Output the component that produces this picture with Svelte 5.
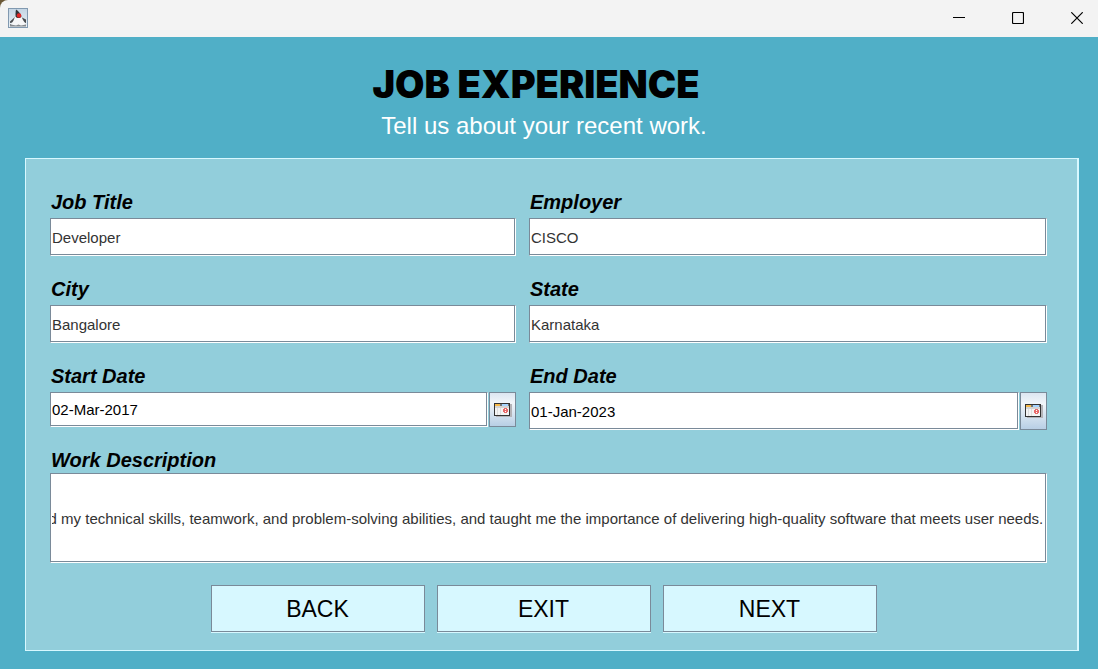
<script>
  import { onMount } from 'svelte';

  let jobTitle = $state('Developer');
  let employer = $state('CISCO');
  let city = $state('Bangalore');
  let region = $state('Karnataka');
  let startDate = $state('02-Mar-2017');
  let endDate = $state('01-Jan-2023');
  let description = $state(
    'enhanced my technical skills, teamwork, and problem-solving abilities, and taught me the importance of delivering high-quality software that meets user needs.'
  );
  let descriptionField;

  // Keep the end of a long description in view.
  onMount(() => {
    descriptionField.scrollLeft = descriptionField.scrollWidth;
  });
</script>

{#snippet calendar()}
  <svg width="18" height="14" viewBox="0 0 18 14" shape-rendering="crispEdges" aria-hidden="true">
    <rect x="2" y="1" width="16" height="13" fill="#b4b4b8" />
    <rect width="16" height="13" fill="#333" />
    <rect x="1" y="1" width="14" height="11" fill="#f4f4f4" />
    <rect x="1" y="1" width="5" height="2" fill="#f5b94a" />
    <rect x="6" y="1" width="2" height="2" fill="#777" />
    <rect x="8" y="1" width="6" height="2" fill="#a5d4ff" />
    <rect x="14" y="1" width="1" height="2" fill="#777" />
    <rect x="1" y="3" width="14" height="2" fill="#d5d5d5" />
    <path d="M3.5 5v7M6.5 5v7" stroke="#dedede" />
    <path d="M9 6h1v-1h3v1h1v3h-1v1h-3v-1h-1z" fill="#e86a6a" />
    <path d="M11 6h1v1h-1zM11 8h1v1h-1z" fill="#fff" />
  </svg>
{/snippet}

<div class="window">
  <header class="titlebar">
    <svg class="app-icon" width="20" height="20" viewBox="0 0 20 20" aria-hidden="true">
      <defs>
        <linearGradient id="tile" x1="0" y1="0" x2="0" y2="1">
          <stop offset="0" stop-color="#c3d5e4" />
          <stop offset="1" stop-color="#eaf0f5" />
        </linearGradient>
      </defs>
      <rect x="0.5" y="0.5" width="19" height="19" fill="url(#tile)" stroke="#8199b0" />
      <path d="M2 16h16v2.500H2z" fill="#85898d" />
      <path d="M7 9 2 13.500V15l5-1zM13 9l5 2.500V15l-4-1z" fill="#4b4d50" />
      <path d="M9.500 3C7.500 6 7 9 5.500 12.500L3 16.500l5 1 2.500-1 2.500 1 5-1-3-4.500C13.500 8.500 12 5 9.500 3z" fill="#f6f6f7" />
      <path d="M8 1.500C7.500 4 7.500 6 7.500 8.500c1.500 2 4.500 2 6 0C12.500 5.500 10.500 3 8 1.500z" fill="#303338" />
      <circle cx="11" cy="7.500" r="2.300" fill="#e02424" />
    </svg>
    <div class="controls">
      <button aria-label="Minimize">
        <svg width="12" height="12" viewBox="0 0 12 12"><path d="M0 5.500h12" stroke="#000" /></svg>
      </button>
      <button aria-label="Maximize">
        <svg width="12" height="12" viewBox="0 0 12 12"><rect x="0.500" y="0.500" width="11" height="11" rx="1" fill="none" stroke="#000" stroke-width="1.200" /></svg>
      </button>
      <button aria-label="Close">
        <svg width="12" height="12" viewBox="0 0 12 12"><path d="M.3.3l11.400 11.400M11.700.3.3 11.700" stroke="#000" stroke-width="1.200" /></svg>
      </button>
    </div>
  </header>

  <main>
    <div class="heading">
      <h1>JOB EXPERIENCE</h1>
      <p>Tell us about your recent work.</p>
    </div>

    <form onsubmit={(e) => e.preventDefault()}>
      <div class="fields">
        <div class="field">
          <label for="job-title">Job Title</label>
          <input id="job-title" type="text" bind:value={jobTitle} />
        </div>
        <div class="field">
          <label for="employer">Employer</label>
          <input id="employer" type="text" bind:value={employer} />
        </div>
        <div class="field">
          <label for="city">City</label>
          <input id="city" type="text" bind:value={city} />
        </div>
        <div class="field">
          <label for="state">State</label>
          <input id="state" type="text" bind:value={region} />
        </div>
        <div class="field">
          <label for="start-date">Start Date</label>
          <div class="date short">
            <input id="start-date" type="text" bind:value={startDate} />
            <button type="button" aria-label="Choose start date">{@render calendar()}</button>
          </div>
        </div>
        <div class="field">
          <label for="end-date">End Date</label>
          <div class="date">
            <input id="end-date" type="text" bind:value={endDate} />
            <button type="button" aria-label="Choose end date">{@render calendar()}</button>
          </div>
        </div>
      </div>

      <div class="description">
        <label for="description">Work Description</label>
        <input id="description" type="text" bind:value={description} bind:this={descriptionField} />
      </div>

      <div class="actions">
        <button type="button">BACK</button>
        <button type="button">EXIT</button>
        <button type="submit">NEXT</button>
      </div>
    </form>
  </main>
</div>

<style>
  :global(body) {
    margin: 0;
    background: #50afc7;
  }

  .window,
  .window * {
    box-sizing: border-box;
  }

  .window {
    min-height: 100vh;
    display: flex;
    flex-direction: column;
    font-family: 'Liberation Sans', Arial, sans-serif;
    background: linear-gradient(#6b5836, #6b5836) top left / 8px 8px no-repeat #50afc7;
  }

  .titlebar {
    height: 37px;
    display: flex;
    justify-content: space-between;
    align-items: center;
    padding: 0 0 1px 8px;
    background: #f3f3f3;
    border-top-left-radius: 8px;
  }

  .controls {
    display: flex;
    gap: 47px;
    padding-right: 15px;
  }

  .controls button {
    display: flex;
    padding: 0;
    border: 0;
    background: none;
  }

  main {
    flex: 1;
    display: flex;
    flex-direction: column;
    padding: 24px 19px 18px 25px;
  }

  .heading {
    margin-bottom: 14px;
    text-align: center;
  }

  h1 {
    margin: 0;
    padding-right: 32px;
    font: 900 38px/46px Inter, 'Arial Black', sans-serif;
    font-variation-settings: 'opsz' 14;
    color: #000;
  }

  p {
    margin: 0;
    padding-right: 16px;
    font-size: 24px;
    line-height: 37px;
    color: #fff;
  }

  form {
    flex: 1;
    padding: 30px 30px 18px 24px;
    border: 1px solid #d7f8ff;
    border-right-width: 2px;
    background: #92cedb;
  }

  .fields {
    display: grid;
    grid-template-columns: 466fr 518fr;
    gap: 20px 13px;
  }

  label {
    display: block;
    padding-left: 1px;
    font: italic bold 20px/26px 'Liberation Sans', Arial, sans-serif;
    color: #000;
  }

  .field {
    display: flex;
    flex-direction: column;
    gap: 3px;
  }

  input {
    display: block;
    width: 100%;
    height: 38px;
    margin: 0;
    padding: 0 1px;
    border: 1px solid #7a8a99;
    border-right: 1px solid #fff;
    border-bottom: 1px solid #fff;
    border-radius: 0;
    outline: none;
    background: #fff;
    box-shadow: inset -1px -1px 0 #7a8a99;
    font: 15px 'Liberation Sans', Arial, sans-serif;
    color: #333;
  }

  .date {
    display: flex;
    gap: 1px;
    height: 38px;
  }

  .date.short {
    height: 35px;
  }

  .date input {
    flex: 1;
    min-width: 0;
    height: 100%;
    color: #000;
  }

  .date button {
    flex: none;
    width: 27px;
    display: flex;
    align-items: center;
    justify-content: center;
    padding: 0;
    border: 1px solid #7a8a99;
    background: linear-gradient(#dce6f1, #f2f6fa 30%, #b8cfe5);
  }

  .description {
    margin-top: 17px;
  }

  .description input {
    height: 90px;
    padding-right: 3px;
  }

  .actions {
    display: flex;
    justify-content: center;
    gap: 12px;
    margin-top: 22px;
    padding-right: 10px;
  }

  .actions button {
    flex: 0 1 214px;
    height: 47px;
    padding: 2px 0 0;
    border: 1px solid #7a8a99;
    background: #d7f8ff;
    box-shadow: 0 1px 0 #d7f8ff;
    font: 23px 'Liberation Sans', Arial, sans-serif;
    color: #000;
  }
</style>
